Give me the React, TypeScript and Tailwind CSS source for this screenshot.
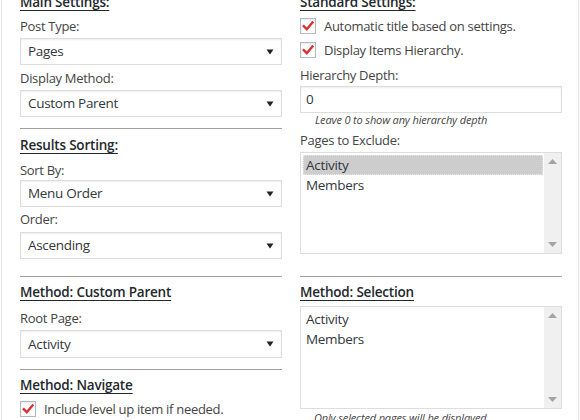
import React from "react";

const font = "font-['Open_Sans',sans-serif]";

function Heading({ children, className = "" }: { children: React.ReactNode; className?: string }) {
  return (
    <div className={`shrink-0 h-[20px] leading-[20px] text-[13.5px] tracking-[-0.2px] font-semibold text-[#23282d] ${className}`}>
      <span className="underline underline-offset-[3px] decoration-1">{children}</span>
    </div>
  );
}

function Label({ children, className = "" }: { children: React.ReactNode; className?: string }) {
  return (
    <div className={`shrink-0 h-[18px] leading-[18px] text-[13px] tracking-[-0.3px] text-[#444] ${className}`}>
      {children}
    </div>
  );
}

function Select({ value, className = "" }: { value: string; className?: string }) {
  return (
    <div
      className={`shrink-0 h-[27px] w-[262px] border border-[#ddd] shadow-[inset_0_1px_2px_rgba(0,0,0,0.07)] bg-white flex items-center justify-between pl-[7px] pr-[7px] text-[13.5px] tracking-[-0.3px] text-[#32373c] ${className}`}
    >
      <span>{value}</span>
      <svg width="8" height="6" viewBox="0 0 8 6">
        <path d="M0.5 0.5 L7.5 0.5 L4 5.5 Z" fill="#222" />
      </svg>
    </div>
  );
}

function Check({ label, className = "" }: { label: string; className?: string }) {
  return (
    <div className={`shrink-0 h-[16px] flex items-center gap-[8px] ${className}`}>
      <div className="w-[16px] h-[16px] border border-[#b4b9be] bg-white shadow-[inset_0_1px_2px_rgba(0,0,0,0.1)] flex items-center justify-center">
        <svg width="14" height="14" viewBox="0 0 14 14">
          <path d="M2.8 7.2 L5.8 10.2 L11.5 3.5" fill="none" stroke="#dc3232" strokeWidth="2.4" strokeLinecap="square" />
        </svg>
      </div>
      <span className="text-[13px] tracking-[-0.3px] text-[#444] leading-[16px]">{label}</span>
    </div>
  );
}

function Listbox({ selected, className = "" }: { selected?: boolean; className?: string }) {
  return (
    <div className={`shrink-0 w-[262px] border border-[#ddd] bg-white flex ${className}`}>
      <div className="flex-1 pt-[2px] pl-[2px] pr-[1px] text-[13.5px] tracking-[-0.3px] text-[#32373c]">
        <div
          className={`h-[20px] leading-[20px] pl-[3px] ${
            selected ? "bg-[#cdcdcd] outline outline-1 outline-dotted outline-[#e8e8e8] -outline-offset-1" : ""
          }`}
        >
          Activity
        </div>
        <div className="h-[20px] leading-[20px] pl-[3px]">Members</div>
      </div>
      <div className="w-[17px] bg-[#f0f0f0] flex flex-col justify-between items-center py-[6px]">
        <svg width="9" height="5" viewBox="0 0 9 5">
          <path d="M0 5 L4.5 0 L9 5 Z" fill="#a3a3a3" />
        </svg>
        <svg width="9" height="5" viewBox="0 0 9 5">
          <path d="M0 0 L4.5 5 L9 0 Z" fill="#a3a3a3" />
        </svg>
      </div>
    </div>
  );
}

function Hr({ className = "" }: { className?: string }) {
  return <div className={`shrink-0 h-px w-[262px] bg-[#a0a0a0] ${className}`} />;
}

export default function App() {
  return (
    <div className={`w-[580px] h-[420px] overflow-hidden bg-white relative ${font}`}>
      <div className="flex h-full">
        <div className="w-[1px] ml-[1px] bg-[#e5e5e5] h-full shrink-0" />
        <div className="flex items-start gap-[18px] pl-[18px] -mt-[8px]">
          {/* Left column */}
          <div className="w-[262px] flex flex-col shrink-0">
            <Heading>Main Settings:</Heading>
            <Label className="mt-[5px]">Post Type:</Label>
            <Select value="Pages" className="mt-[3px]" />
            <Label className="mt-[4px]">Display Method:</Label>
            <Select value="Custom Parent" className="mt-[3px]" />
            <Hr className="mt-[11px]" />
            <Heading className="mt-[6px]">Results Sorting:</Heading>
            <Label className="mt-[6px]">Sort By:</Label>
            <Select value="Menu Order" className="mt-[1px]" />
            <Label className="mt-[3px]">Order:</Label>
            <Select value="Ascending" className="mt-[4px]" />
            <Hr className="mt-[17px]" />
            <Heading className="mt-[5px]">Method: Custom Parent</Heading>
            <Label className="mt-[7px]">Root Page:</Label>
            <Select value="Activity" className="mt-[3px] h-[28px]" />
            <Hr className="mt-[11px]" />
            <Heading className="mt-[5px]">Method: Navigate</Heading>
            <Check label="Include level up item if needed." className="mt-[6px]" />
          </div>
          {/* Right column */}
          <div className="w-[262px] flex flex-col shrink-0">
            <Heading>Standard Settings:</Heading>
            <Check label="Automatic title based on settings." className="mt-[6px]" />
            <Check label="Display Items Hierarchy." className="mt-[8px]" />
            <Label className="mt-[8px]">Hierarchy Depth:</Label>
            <div className="shrink-0 mt-[2px] h-[27px] w-[262px] border border-[#ddd] shadow-[inset_0_1px_2px_rgba(0,0,0,0.07)] flex items-center pl-[5px] text-[13.5px] text-[#32373c]">
              0
            </div>
            <div className="shrink-0 h-[14px] leading-[14px] pl-[15px] text-[11px] tracking-[-0.15px] italic text-[#444]">
              Leave 0 to show any hierarchy depth
            </div>
            <Label className="mt-[4px]">Pages to Exclude:</Label>
            <Listbox selected className="mt-[3px] h-[102px]" />
            <Hr className="mt-[22px]" />
            <Heading className="mt-[5px]">Method: Selection</Heading>
            <Listbox className="mt-[4px] h-[103px]" />
            <div className="shrink-0 h-[14px] leading-[14px] pl-[14px] mt-[2px] text-[11px] tracking-[-0.15px] italic text-[#444]">
              Only selected pages will be displayed.
            </div>
          </div>
        </div>
      </div>
      <div className="absolute top-0 right-[1px] w-[1px] h-full bg-[#e5e5e5]" />
    </div>
  );
}
